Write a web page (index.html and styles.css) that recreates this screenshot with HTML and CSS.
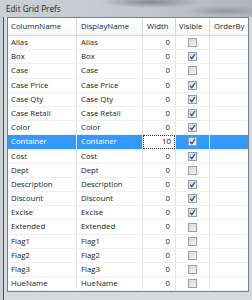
FILE: index.html
```html
<!doctype html>
<html lang="en">
<head>
    <meta charset="utf-8">
    <meta name="viewport" content="width=device-width, initial-scale=1">
    <title>Edit Grid Prefs</title>
    <link rel="stylesheet" href="styles.css">
</head>

<body>

    <div class="window">
        <div class="titlebar">Edit Grid Prefs</div>

        <div class="frame">
            <div class="grid">
                <div class="row head">
                    <div class="cell">ColumnName</div>
                    <div class="cell">DisplayName</div>
                    <div class="cell">Width</div>
                    <div class="cell">Visible</div>
                    <div class="cell">OrderBy</div>
                </div>

                <div class="row"><div class="cell">Alias</div><div class="cell">Alias</div><div class="cell num">0</div><div class="cell chk"><span class="box"></span></div><div class="cell"></div></div>
                <div class="row"><div class="cell">Box</div><div class="cell">Box</div><div class="cell num">0</div><div class="cell chk"><span class="box on"></span></div><div class="cell"></div></div>
                <div class="row"><div class="cell">Case</div><div class="cell">Case</div><div class="cell num">0</div><div class="cell chk"><span class="box"></span></div><div class="cell"></div></div>
                <div class="row"><div class="cell">Case Price</div><div class="cell">Case Price</div><div class="cell num">0</div><div class="cell chk"><span class="box on"></span></div><div class="cell"></div></div>
                <div class="row"><div class="cell">Case Qty</div><div class="cell">Case Qty</div><div class="cell num">0</div><div class="cell chk"><span class="box on"></span></div><div class="cell"></div></div>
                <div class="row"><div class="cell">Case Retail</div><div class="cell">Case Retail</div><div class="cell num">0</div><div class="cell chk"><span class="box on"></span></div><div class="cell"></div></div>
                <div class="row"><div class="cell">Color</div><div class="cell">Color</div><div class="cell num">0</div><div class="cell chk"><span class="box on"></span></div><div class="cell"></div></div>
                <div class="row selected"><div class="cell">Container</div><div class="cell">Container</div><div class="cell num editing"><span class="edit">10</span></div><div class="cell chk"><span class="box on"></span></div><div class="cell"></div></div>
                <div class="row"><div class="cell">Cost</div><div class="cell">Cost</div><div class="cell num">0</div><div class="cell chk"><span class="box on"></span></div><div class="cell"></div></div>
                <div class="row"><div class="cell">Dept</div><div class="cell">Dept</div><div class="cell num">0</div><div class="cell chk"><span class="box"></span></div><div class="cell"></div></div>
                <div class="row"><div class="cell">Description</div><div class="cell">Description</div><div class="cell num">0</div><div class="cell chk"><span class="box on"></span></div><div class="cell"></div></div>
                <div class="row"><div class="cell">Discount</div><div class="cell">Discount</div><div class="cell num">0</div><div class="cell chk"><span class="box on"></span></div><div class="cell"></div></div>
                <div class="row"><div class="cell">Excise</div><div class="cell">Excise</div><div class="cell num">0</div><div class="cell chk"><span class="box on"></span></div><div class="cell"></div></div>
                <div class="row"><div class="cell">Extended</div><div class="cell">Extended</div><div class="cell num">0</div><div class="cell chk"><span class="box"></span></div><div class="cell"></div></div>
                <div class="row"><div class="cell">Flag1</div><div class="cell">Flag1</div><div class="cell num">0</div><div class="cell chk"><span class="box"></span></div><div class="cell"></div></div>
                <div class="row"><div class="cell">Flag2</div><div class="cell">Flag2</div><div class="cell num">0</div><div class="cell chk"><span class="box"></span></div><div class="cell"></div></div>
                <div class="row"><div class="cell">Flag3</div><div class="cell">Flag3</div><div class="cell num">0</div><div class="cell chk"><span class="box"></span></div><div class="cell"></div></div>
                <div class="row"><div class="cell">HueName</div><div class="cell">HueName</div><div class="cell num">0</div><div class="cell chk"><span class="box"></span></div><div class="cell"></div></div>
            </div>
        </div>
    </div>

</body>

</html>
```

FILE: styles.css
```css
html,
body {
    margin: 0;
    padding: 0;
}

body {
    width: 252px;
    height: 300px;
    overflow: hidden;
    font-family: 'Open Sans', 'Noto Sans', sans-serif;
    font-size: 7.8px;
    color: #1a1a1a;
}

.window {
    display: flex;
    flex-direction: column;
    width: 252px;
    height: 300px;
    background: linear-gradient(to right, #c9d0d6, #c2c8ce 55%, #aeb5bb);
}

.titlebar {
    flex: 0 0 17px;
    box-sizing: border-box;
    padding: 3px 0 0 6px;
    font-size: 8.2px;
    line-height: 11px;
    color: #222;
    background:
        radial-gradient(ellipse 50px 6px at 150px 2px, rgba(60, 66, 72, .45), transparent),
        radial-gradient(ellipse 40px 5px at 225px 11px, rgba(80, 86, 92, .35), transparent);
}

.frame {
    flex: 1;
    margin-left: 3px;
    padding: 0 3px 0 3px;
    border-left: 1px solid #4d4f52;
    background: #d6dadd;
    overflow: hidden;
}

.grid {
    width: 240px;
    background: #fff;
    border: 1px solid #7c7f83;
}

.row {
    display: grid;
    grid-template-columns: 69px 66px 33px 34px 38px;
    height: 14.2px;
    box-sizing: border-box;
    border-bottom: 1px solid #efefef;
    line-height: 13px;
}

.cell {
    box-sizing: border-box;
    padding-left: 3px;
    white-space: nowrap;
    overflow: hidden;
    border-right: 1px solid #e4e4e4;
}

.cell:nth-child(2) {
    padding-left: 4px;
}

.cell:last-child {
    border-right: none;
}

.head {
    height: 18px;
    line-height: 17px;
    color: #1e1e1e;
    background: linear-gradient(#ffffff, #f7f8f9);
    border-bottom: 1px solid #d5d5d5;
}

.head .cell {
    border-right-color: #d5d5d5;
}

.head .cell:nth-child(3),
.head .cell:nth-child(5) {
    padding-left: 4px;
}

.num {
    padding: 0 5px 0 0;
    text-align: right;
}

.chk {
    display: flex;
    align-items: center;
    justify-content: center;
    padding: 0;
}

.box {
    box-sizing: border-box;
    width: 9px;
    height: 9px;
    border: 1px solid #9c9fa3;
    background: linear-gradient(135deg, #d6d8db, #f4f5f6);
}

.box.on {
    background:
        url("data:image/svg+xml,%3Csvg xmlns='http://www.w3.org/2000/svg' width='7' height='7'%3E%3Cpath d='M1.2 3.8 L2.8 5.6 L6 1' fill='none' stroke='%23274a9c' stroke-width='1.3'/%3E%3C/svg%3E") center / 7px 7px no-repeat,
        linear-gradient(135deg, #d6d8db, #f4f5f6);
}

.selected {
    background: #3399ff;
    color: #fff;
}

.selected .editing {
    padding: 0;
}

.edit {
    display: block;
    box-sizing: border-box;
    height: 100%;
    padding-right: 4px;
    line-height: 12px;
    color: #000;
    background: #fff;
    outline: 1px dotted #333;
    outline-offset: -1px;
}
```
